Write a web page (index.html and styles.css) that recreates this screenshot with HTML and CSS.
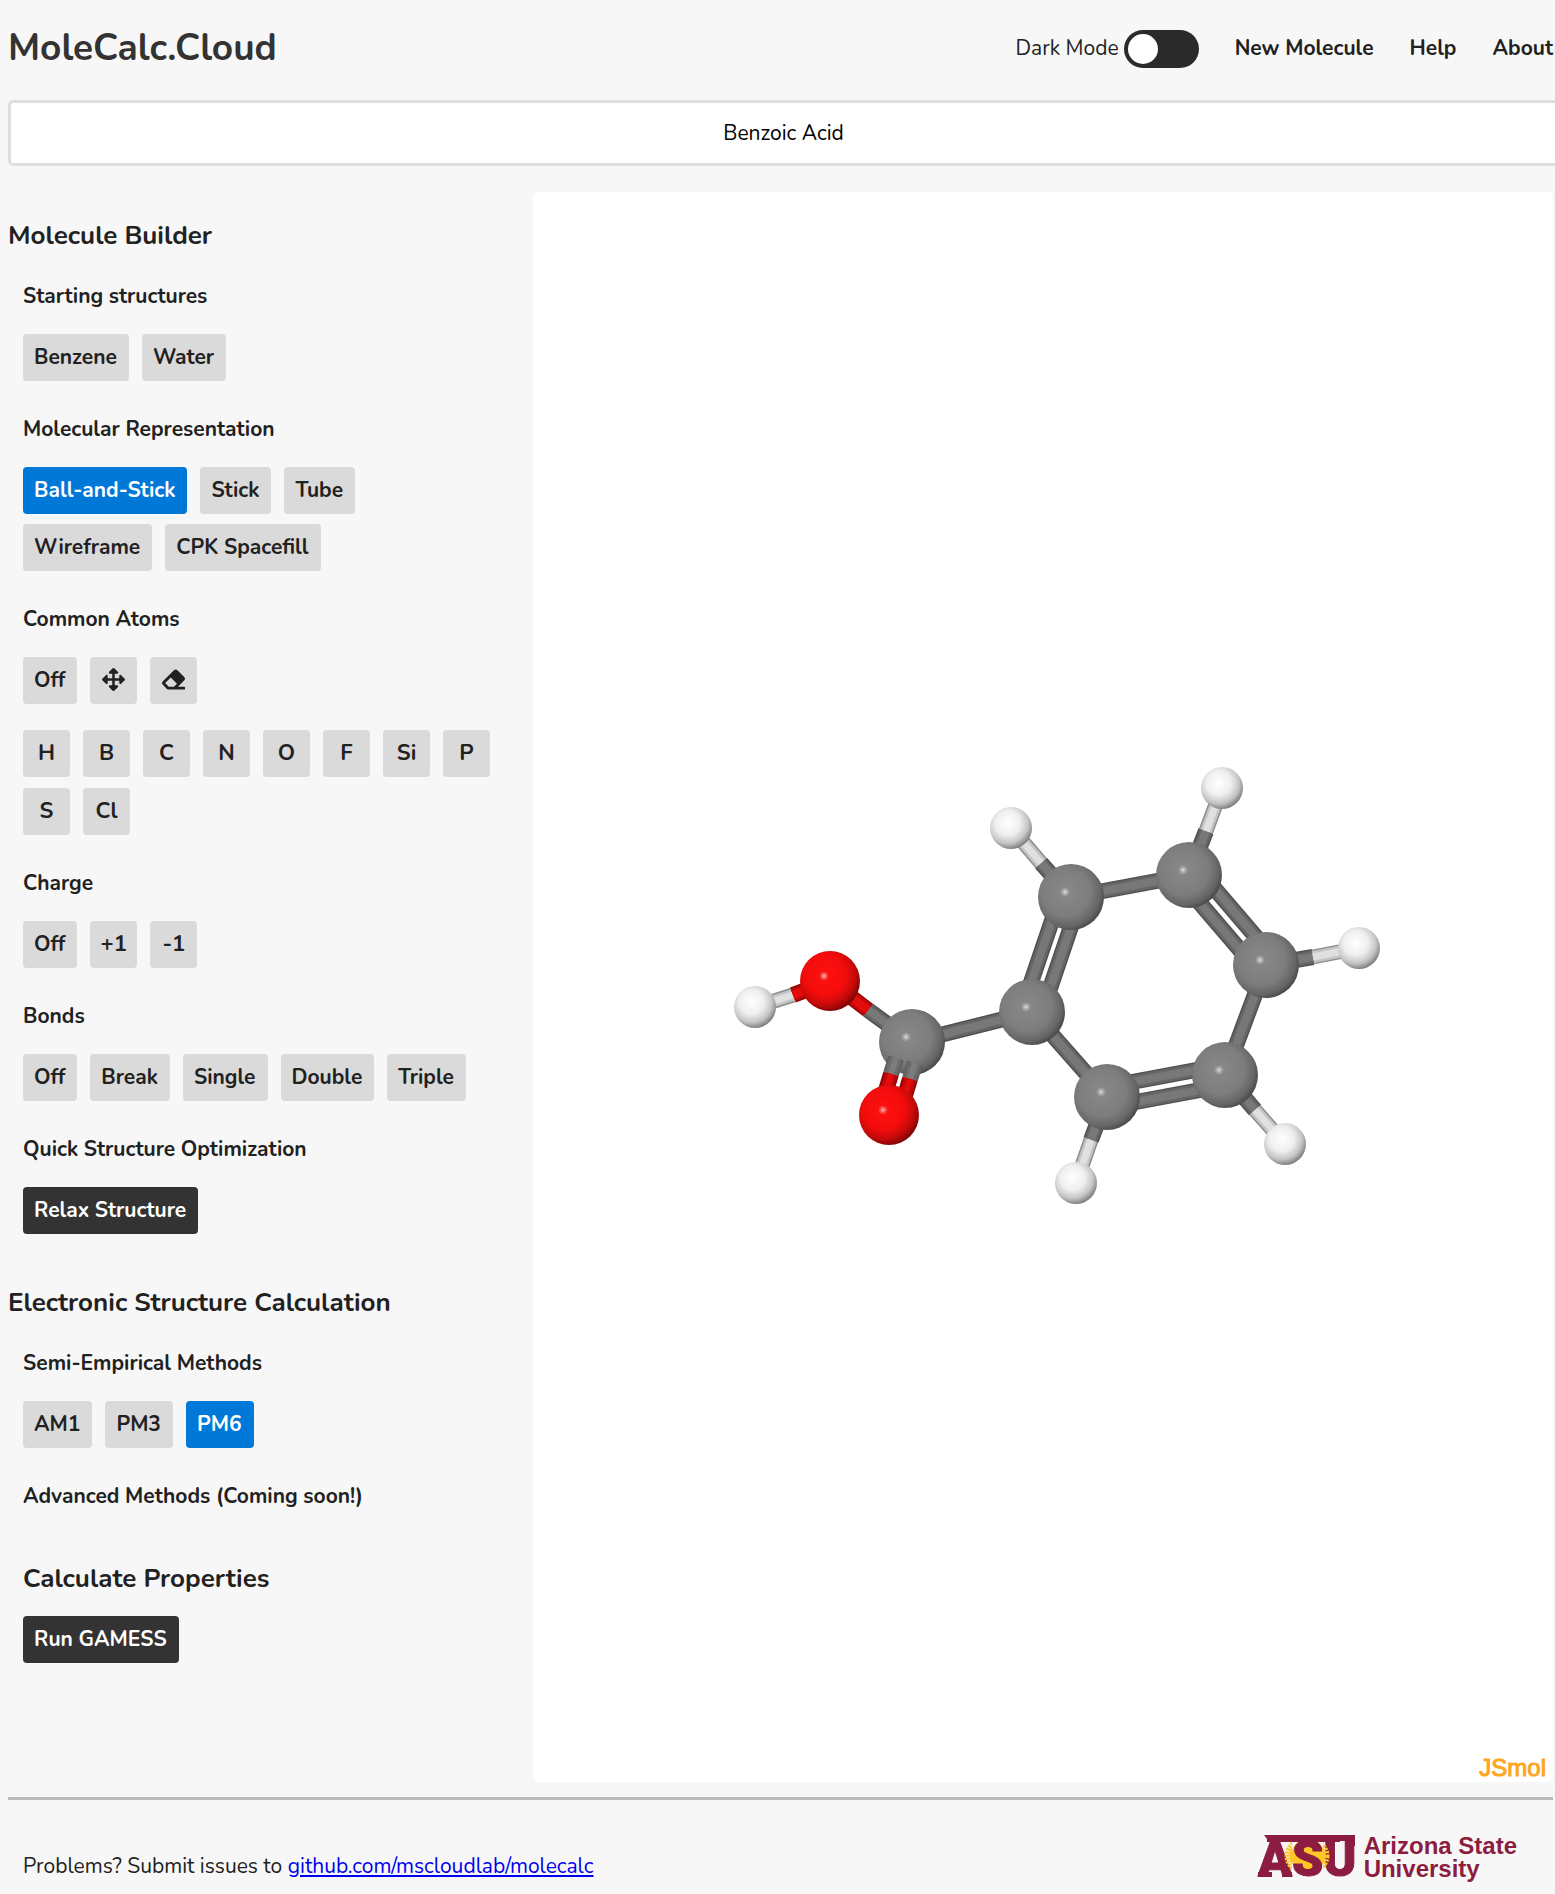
FILE: index.html
```html
<!DOCTYPE html>
<html lang="en">
<head>
<meta charset="utf-8">
<title>MoleCalc.Cloud</title>
<meta name="viewport" content="width=device-width, initial-scale=1">
<link rel="stylesheet" href="styles.css">
</head>
<body>
<header class="header">
  <h1 class="brand">MoleCalc.Cloud</h1>
  <nav class="nav">
    <label class="mode"><span class="nav-text">Dark Mode</span> <input class="switch" type="checkbox" role="switch"></label>
    <a class="nav-text nav-link" href="#new">New Molecule</a>
    <a class="nav-text nav-link" href="#help">Help</a>
    <a class="nav-text nav-link" href="#about">About</a>
  </nav>
</header>

<input class="search" type="text" aria-label="Molecule name" value="Benzoic Acid">

<main class="workspace">
  <div class="sidebar">
    <section class="panel">
      <h2 class="panel-title">Molecule Builder</h2>
      <div class="group">
        <h3 class="group-title">Starting structures</h3>
        <div class="buttons"><button class="btn">Benzene</button><button class="btn">Water</button></div>
      </div>
      <div class="group">
        <h3 class="group-title">Molecular Representation</h3>
        <div class="buttons"><button class="btn btn-active">Ball-and-Stick</button><button class="btn">Stick</button><button class="btn">Tube</button><button class="btn">Wireframe</button><button class="btn">CPK Spacefill</button></div>
      </div>
      <div class="group">
        <h3 class="group-title">Common Atoms</h3>
        <div class="buttons">
          <button class="btn">Off</button>
          <button class="btn btn-square" aria-label="Move"><svg class="icon" viewBox="0 0 512 512" aria-hidden="true"><path d="M352.201 425.775l-79.196 79.196c-9.373 9.373-24.568 9.373-33.941 0l-79.196-79.196c-15.119-15.119-4.411-40.971 16.971-40.97h51.162L228 284H127.196v51.162c0 21.382-25.851 32.09-40.971 16.971L7.029 272.937c-9.373-9.373-9.373-24.569 0-33.941L86.225 159.8c15.119-15.119 40.971-4.411 40.971 16.971V228H228V127.196h-51.23c-21.382 0-32.09-25.851-16.971-40.971l79.196-79.196c9.373-9.373 24.568-9.373 33.941 0l79.196 79.196c15.119 15.119 4.411 40.971-16.971 40.971h-51.162V228h100.804v-51.162c0-21.382 25.851-32.09 40.97-16.971l79.196 79.196c9.373 9.373 9.373 24.569 0 33.941L425.773 352.2c-15.119 15.119-40.971 4.411-40.97-16.971V284H284v100.804h51.23c21.382 0 32.09 25.851 16.971 40.971z"/></svg></button>
          <button class="btn btn-square" aria-label="Erase"><svg class="icon" viewBox="0 0 512 512" aria-hidden="true"><path d="M497.941 273.941c18.745-18.745 18.745-49.137 0-67.882l-160-160c-18.745-18.745-49.136-18.746-67.883 0l-256 256c-18.745 18.745-18.745 49.137 0 67.882l96 96A48.004 48.004 0 0 0 144 480h356c6.627 0 12-5.373 12-12v-40c0-6.627-5.373-12-12-12H355.883l142.058-142.059zm-302.627-62.627l137.373 137.373L265.373 416H150.628l-80-80 124.686-124.686z"/></svg></button>
        </div>
        <div class="buttons buttons-next">
          <button class="btn btn-square">H</button><button class="btn btn-square">B</button><button class="btn btn-square">C</button><button class="btn btn-square">N</button><button class="btn btn-square">O</button><button class="btn btn-square">F</button><button class="btn btn-square">Si</button><button class="btn btn-square">P</button><button class="btn btn-square">S</button><button class="btn btn-square">Cl</button>
        </div>
      </div>
      <div class="group">
        <h3 class="group-title">Charge</h3>
        <div class="buttons"><button class="btn">Off</button><button class="btn btn-square">+1</button><button class="btn btn-square">-1</button></div>
      </div>
      <div class="group">
        <h3 class="group-title">Bonds</h3>
        <div class="buttons"><button class="btn">Off</button><button class="btn">Break</button><button class="btn">Single</button><button class="btn">Double</button><button class="btn">Triple</button></div>
      </div>
      <div class="group">
        <h3 class="group-title">Quick Structure Optimization</h3>
        <div class="buttons"><button class="btn btn-dark">Relax Structure</button></div>
      </div>
    </section>

    <section class="panel">
      <h2 class="panel-title">Electronic Structure Calculation</h2>
      <div class="group">
        <h3 class="group-title">Semi-Empirical Methods</h3>
        <div class="buttons"><button class="btn">AM1</button><button class="btn">PM3</button><button class="btn btn-active">PM6</button></div>
      </div>
      <div class="group">
        <h3 class="group-title">Advanced Methods (Coming soon!)</h3>
      </div>
    </section>

    <section class="panel panel-run">
      <h2 class="panel-title">Calculate Properties</h2>
      <div class="buttons"><button class="btn btn-dark">Run GAMESS</button></div>
    </section>
  </div>

  <div class="stage">
    <svg class="molecule" viewBox="533 192 1020 1590" role="img" aria-label="Benzoic acid, ball-and-stick model">
      <defs>
        <radialGradient id="carbon" cx=".42" cy=".42" r=".62"><stop offset="0" stop-color="#898989"/><stop offset=".6" stop-color="#7d7d7d"/><stop offset=".85" stop-color="#656565"/><stop offset="1" stop-color="#444"/></radialGradient>
        <radialGradient id="oxygen" cx=".42" cy=".4" r=".63"><stop offset="0" stop-color="#ff1010"/><stop offset=".55" stop-color="#f30c0c"/><stop offset=".8" stop-color="#c20909"/><stop offset="1" stop-color="#780404"/></radialGradient>
        <radialGradient id="hydrogen" cx=".42" cy=".38" r=".65"><stop offset="0" stop-color="#fff"/><stop offset=".45" stop-color="#efefef"/><stop offset=".75" stop-color="#c4c4c4"/><stop offset="1" stop-color="#757575"/></radialGradient>
        <radialGradient id="shine"><stop offset="0" stop-color="#fff" stop-opacity=".75"/><stop offset=".4" stop-color="#fff" stop-opacity=".35"/><stop offset="1" stop-color="#fff" stop-opacity="0"/></radialGradient>
        <g id="c"><circle r="33" fill="url(#carbon)"/><circle cx="-6" cy="-5" r="5" fill="url(#shine)"/></g>
        <g id="o"><circle r="30" fill="url(#oxygen)"/><circle cx="-6" cy="-5" r="5" fill="url(#shine)"/></g>
        <g id="h"><circle r="21" fill="url(#hydrogen)"/></g>
        <path id="grey-bonds" d="M912 1042L1032 1012L1107 1097M1071 897L1189 875M1266 965L1225 1075M1022 1009L1061 894M1041 1015L1080 900M1197 868L1274 958M1181 881L1258 971M1227 1085L1109 1107M1223 1065L1105 1087M912 1042L868 1010M1071 897L1041 863M1189 875L1206 831M1266 965L1313 957M1225 1075L1255 1110M1107 1097L1091 1140"/>
        <path id="white-bonds" d="M1011 828L1041 863M1222 788L1206 831M1359 948L1313 957M1285 1144L1255 1110M1076 1183L1091 1140M755 1007L793 995"/>
        <path id="red-bonds" d="M830 981L868 1010M830 981L793 995"/>
        <path id="carbonyl-c" d="M896 1058L891 1074M915 1063L910 1079"/>
        <path id="carbonyl-o" d="M891 1074L884 1097M910 1079L903 1102"/>
      </defs>
      <g fill="none">
        <use href="#grey-bonds" stroke="#505050" stroke-width="16"/><use href="#grey-bonds" stroke="#666" stroke-width="13"/><use href="#grey-bonds" stroke="#787878" stroke-width="8"/>
        <use href="#white-bonds" stroke="#8c8c8c" stroke-width="15"/><use href="#white-bonds" stroke="#c4c4c4" stroke-width="12"/><use href="#white-bonds" stroke="#e0e0e0" stroke-width="7"/>
        <use href="#red-bonds" stroke="#920606" stroke-width="16"/><use href="#red-bonds" stroke="#c00808" stroke-width="13"/><use href="#red-bonds" stroke="#e40b0b" stroke-width="8"/>
      </g>
      <use href="#c" x="1071" y="897"/><use href="#c" x="1189" y="875"/><use href="#c" x="1266" y="965"/><use href="#c" x="1225" y="1075"/><use href="#c" x="1107" y="1097"/><use href="#c" x="1032" y="1012"/><use href="#c" x="912" y="1042"/>
      <g fill="none">
        <use href="#carbonyl-c" stroke="#606060" stroke-width="16"/><use href="#carbonyl-c" stroke="#6c6c6c" stroke-width="12"/><use href="#carbonyl-c" stroke="#7c7c7c" stroke-width="6"/>
        <use href="#carbonyl-o" stroke="#920606" stroke-width="16"/><use href="#carbonyl-o" stroke="#c00808" stroke-width="12"/><use href="#carbonyl-o" stroke="#e40b0b" stroke-width="6"/>
      </g>
      <use href="#o" x="830" y="981"/><use href="#o" x="889" y="1115"/>
      <use href="#h" x="1011" y="828"/><use href="#h" x="1222" y="788"/><use href="#h" x="1359" y="948"/><use href="#h" x="1285" y="1144"/><use href="#h" x="1076" y="1183"/><use href="#h" x="755" y="1007"/>
    </svg>
    <span class="engine">JSmol</span>
  </div>
</main>

<footer class="footer">
  <p class="issues">Problems? Submit issues to <a href="https://github.com/mscloudlab/molecalc">github.com/mscloudlab/molecalc</a></p>
  <div class="asu">
    <svg class="asu-mark" viewBox="0 0 102 44" role="img" aria-label="ASU">
      <defs>
        <clipPath id="sun-sides"><path d="M20 5H34V44H20ZM65 5H76V38H65Z"/></clipPath>
      </defs>
      <ellipse cx="50" cy="22" rx="17" ry="17" fill="#ffc627"/>
      <path class="asu-bar" d="M6 1H82V8H56Q50 5 42 8H9L9 5ZM82 1H97V12H87V7H82ZM0 38H14V43H0ZM24 38H34V43H24Z"/>
      <text class="asu-letters" x="0" y="42">ASU</text>
      <g clip-path="url(#sun-sides)" fill="none" stroke="#ffc627">
        <ellipse cx="49" cy="22" rx="16" ry="15" stroke-width="3"/>
        <ellipse cx="49" cy="22" rx="19" ry="16" stroke-width="7" stroke-dasharray="2 1"/>
      </g>
    </svg>
    <div class="asu-name">Arizona State<br>University</div>
  </div>
</footer>
</body>
</html>
```
FILE: styles.css
```css
* { box-sizing: border-box; }

body {
  margin: 0;
  padding: 0 2px 0 8px;
  overflow-x: hidden;
  background: #f7f7f7;
  color: #212121;
  font-family: Nunito, "Noto Sans", sans-serif;
  font-size: 21px;
  line-height: 28px;
}

h1, h2, h3, p { margin: 0; }

.header {
  display: flex;
  align-items: center;
  justify-content: space-between;
  height: 100px;
  padding-bottom: 2px;
}
.brand { padding-bottom: 2px; color: #333; font-size: 37px; line-height: 48px; font-weight: 700; }
.nav { display: flex; align-items: center; gap: 36px; }
.nav-text { padding-bottom: 3px; }
.mode { display: flex; align-items: center; gap: 5px; }
.nav-link { color: inherit; font-weight: 700; text-decoration: none; }

.switch {
  appearance: none;
  width: 75px;
  height: 38px;
  margin: 0;
  padding: 4px;
  border-radius: 19px;
  background: #2a2a2a;
}
.switch::before {
  content: "";
  display: block;
  width: 30px;
  height: 30px;
  border-radius: 50%;
  background: #fff;
}
.switch:checked::before { margin-left: auto; }

.search {
  display: block;
  box-sizing: content-box;
  width: 100%;
  height: 60px;
  padding: 0;
  border: 3px solid #dfdfdf;
  border-radius: 5px;
  background: #fff;
  color: #000;
  font: inherit;
  text-align: center;
}

.workspace {
  display: flex;
  gap: 40px;
  margin: 26px 0 15px;
}

.sidebar {
  display: flex;
  flex: 0 0 485px;
  flex-direction: column;
  gap: 51px;
  padding-top: 26px;
}
.panel-title { font-size: 26px; line-height: 36px; font-weight: 700; }
.panel-title + .group { margin-top: 28px; }
.panel-title + .buttons { margin-top: 19px; }
.group { padding-left: 15px; }
.group + .group { margin-top: 34px; }
.panel-run { padding-left: 15px; }
.group-title { font-size: 21px; line-height: 28px; font-weight: 700; }

.buttons { display: flex; flex-wrap: wrap; gap: 10px 13px; }
.group-title + .buttons { margin-top: 24px; }
.buttons-next { margin-top: 26px; row-gap: 11px; }

.btn {
  height: 47px;
  padding: 0 12px 2px 11px;
  border: 0;
  border-radius: 4px;
  background: #dadada;
  color: #212121;
  font: inherit;
  font-weight: 700;
}
.btn-square { width: 47px; padding: 0 0 2px; font-size: 22px; }
.btn-active { background: #0078d7; color: #fff; }
.btn-dark { background: #333; color: #fff; }
.icon { display: block; width: 23px; height: 23px; margin: 0 auto; fill: currentColor; }

.stage {
  position: relative;
  flex: 1;
  min-width: 0;
  border-radius: 5px;
  background: #fff;
}
.molecule { display: block; width: 100%; height: auto; }
.engine {
  position: absolute;
  right: 7px;
  bottom: 0;
  color: #ffa51e;
  font-family: "Liberation Sans", Arial, sans-serif;
  font-size: 24px;
  -webkit-text-stroke: 1px #ffa51e;
}

.footer {
  display: flex;
  align-items: flex-end;
  justify-content: space-between;
  padding: 34px 36px 12px 15px;
  border-top: 3px solid #bbb;
}
.issues a { color: #00e; }

.asu { display: flex; gap: 4px; color: #8c1d40; }
.asu-mark { display: block; width: 102px; height: 44px; overflow: visible; }
.asu-letters {
  fill: #8c1d40;
  stroke: #8c1d40;
  stroke-width: 1px;
  font-family: Roboto, "Liberation Sans", sans-serif;
  font-size: 50px;
  font-weight: 900;
}
.asu-bar { fill: #8c1d40; }
.asu-name {
  font-family: "Liberation Sans", Arial, sans-serif;
  font-size: 24px;
  line-height: 23px;
  font-weight: 700;
}
```
